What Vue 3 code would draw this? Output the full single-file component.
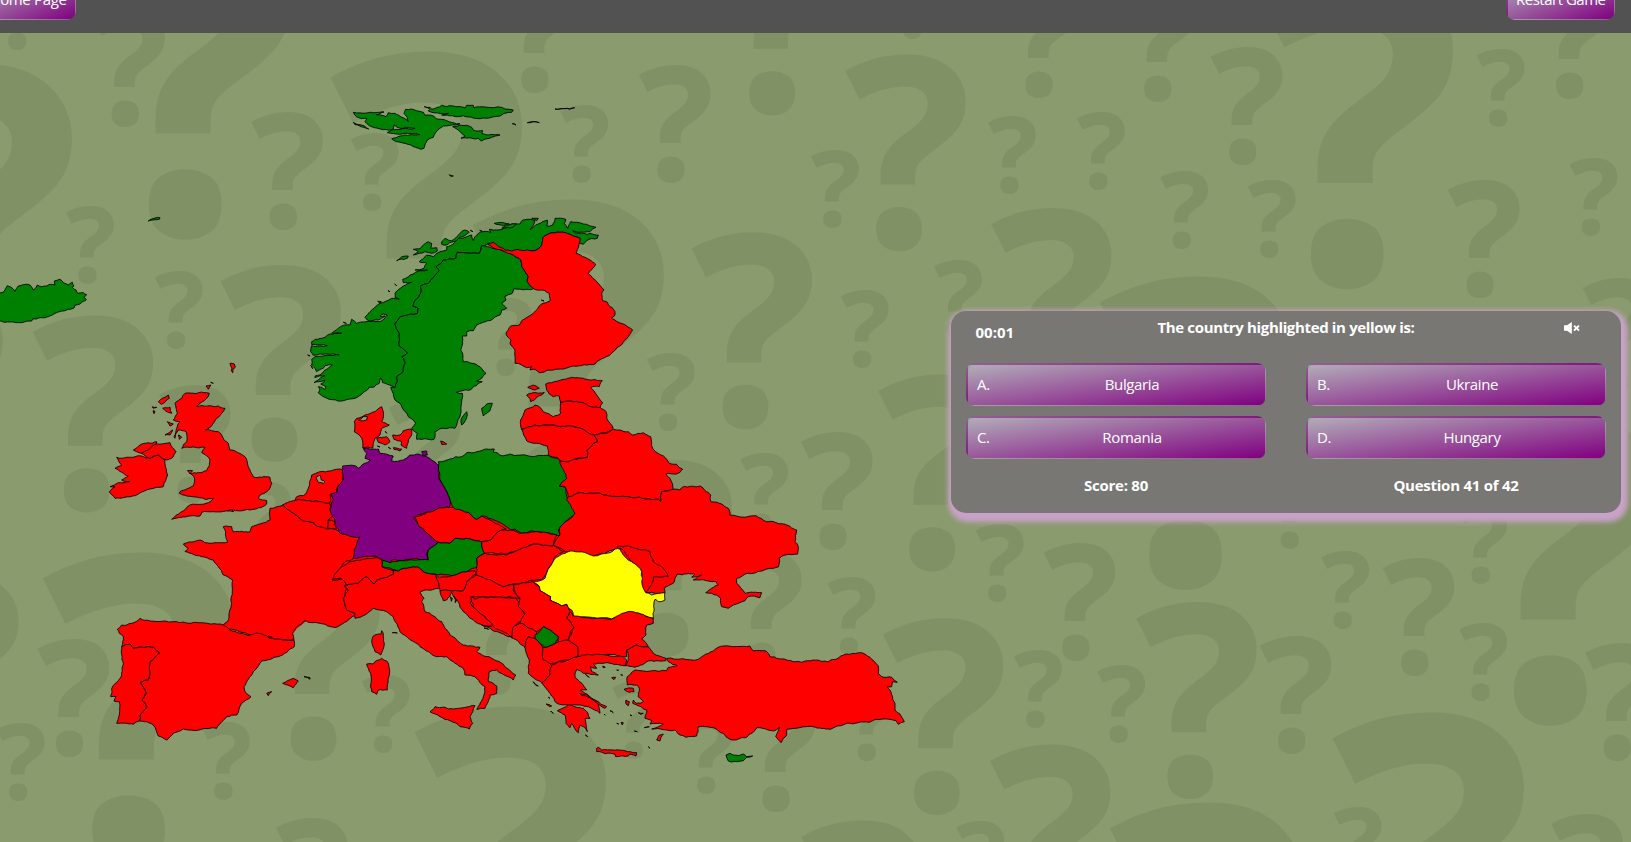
<script setup>
const SIZES = { S: 106, M: 159, L: 267, XL: 425 }

// Question marks of the backdrop: size, then the centre of the dot.
const marks = [
  ['S', 17, 41], ['M', 125.3, 113.3], ['M', 283.3, 216.7], ['S', 87.3, 275], ['S', 372, 202],
  ['S', 176, 340.5], ['XL', 185, 204], ['XL', -34, 341], ['XL', 416, 329], ['L', 274.3, 439.3],
  ['L', 86.5, 490], ['M', 191, 490], ['S', 264, 551], ['S', 581.7, 174.7], ['M', 671, 169.6],
  ['L', 772, 93], ['M', 534.6, 80], ['XL', 558, 477], ['S', 505.7, 367.7], ['L', 745.3, 406.7],
  ['S', 668, 422.7], ['L', 665.5, 634.5], ['S', 761.5, 522], ['M', 762, 656], ['S', 706, 785.7],
  ['M', 776, 799], ['S', 633.5, 750], ['L', 313.3, 738.3], ['S', 223.3, 791.7], ['S', 383, 744],
  ['XL', 128.3, 830], ['M', 308, 923], ['M', 69.5, 744], ['S', 18, 792], ['XL', 500, 984],
  ['M', 497, 682], ['M', 421, 503], ['L', -48, 748],
  ['S', 912.4, 30], ['M', 1039, 85], ['M', 1157.8, 89], ['L', 899, 228.8], ['S', 1009.4, 185.3],
  ['S', 1098.4, 181.5], ['S', 832.3, 219.6], ['M', 1242.6, 151.4], ['S', 1181.6, 240],
  ['S', 1269, 249.2], ['XL', 1347, 253.5], ['S', 1498, 118.7], ['M', 1569.6, 86], ['M', 1480, 284.6],
  ['S', 1590.8, 227.2], ['S', 862, 359.3], ['S', 955.3, 329.2], ['L', 1044.9, 382.3],
  ['XL', 1185.3, 554.2], ['L', 932, 549], ['M', 832.9, 537], ['S', 997.2, 593.4], ['M', 1075.6, 647.6],
  ['S', 1289.7, 540.8], ['S', 1342.7, 620.2], ['M', 1414.8, 662.7], ['S', 1480.5, 575.1],
  ['S', 848.8, 646.5], ['L', 936.7, 792.6], ['S', 1035.3, 719.6], ['S', 1118.5, 734.1],
  ['L', 1190, 776.5], ['M', 1291.8, 741], ['S', 1480.5, 692.2], ['XL', 1550, 690], ['M', 1617.3, 748],
  ['S', 866.8, 752.5], ['L', 1043.8, 919], ['XL', 1195.4, 1080], ['XL', 1418, 990], ['S', 977.5, 890],
  ['L', 855, 995], ['S', 1355, 876], ['M', 1583.3, 919], ['M', 1614.6, 382.3],
].map(([s, cx, cy]) => ({ size: SIZES[s], x: cx - SIZES[s] * 0.204, y: cy + SIZES[s] * 0.071 }))

const R = '#ff0000'
const G = '#008000'
const P = '#800080'
const Y = '#ffff00'
const SEA = '#8a9b6e'

// Borderless land under the countries of the mainland.
const ground = '290,515 330,488 340,470 430,470 520,470 565,450 600,440 600,560 640,580 640,600 620,635 600,655 550,665 532,640 515,632 470,596 440,576 400,580 360,603 310,618 288,636 232,628 240,600 235,560'

// Each sheet of the map: origin, then [fill, points] at three units per pixel.
const sheets = [
  [0, 0, [
    [G, '-10,878 12,875 22,857 32,861 45,874 55,858 70,854 90,855 100,870 112,855 125,860 140,858 150,853 165,855 163,843 180,838 190,848 205,855 217,847 222,858 217,862 228,870 233,880 250,878 260,884 253,892 259,899 240,912 225,916 222,924 200,930 185,933 165,940 145,950 120,953 98,957 95,963 65,968 30,966 0,962 -10,960'],
    [G, '445,663 465,654 480,653 478,658'],
  ]],
  [300, 80, [
    [G, '160,97 200,99 252,96 240,101 228,104 258,110 265,98 285,100 305,112 325,125 322,112 312,100 317,88 350,92 370,97 375,106 400,108 410,117 440,122 480,131 450,136 430,138 408,156 400,172 382,180 372,205 362,208 340,200 290,185 275,176 300,168 360,164 300,163 262,158 270,153 345,145 320,142 300,145 283,135 280,147 250,149 215,140 195,125 200,115 185,116 165,106'],
    [G, '160,127 180,134 206,147 190,142 165,134'],
    [G, '373,80 390,82 395,88 425,76 440,80 495,84 500,76 520,76 522,84 545,80 640,90 635,97 612,100 600,108 560,115 520,114 490,107 425,105 445,100 400,98 385,93 390,88'],
    [G, '458,140 500,136 515,142 520,150 548,152 545,160 600,165 575,172 545,183 535,175 483,175 495,168 480,155'],
    [G, '765,87 824,83'], [G, '637,131 648,135'], [G, '682,128 700,125 718,128'], [G, '448,284 460,288 452,289'],
  ]],
  [300, 200, [
    [G, '55,560 60,570 55,578 75,592 100,599 130,602 165,595 190,578 208,562 222,561 238,550 242,533 248,548 262,553 285,563 292,545 290,530 310,515 316,488 305,470 323,458 298,438 298,400 285,372 300,350 352,340 355,325 338,318 362,280 362,257 385,250 392,240 418,212 408,200 430,180 468,175 472,157 538,160 545,137 562,133 590,150 640,155 705,152 722,140 728,115 745,102 780,97 810,103 840,115 835,130 850,133 860,122 892,115 895,105 870,100 862,103 835,100 818,93 870,95 888,82 850,72 812,65 803,85 793,70 797,58 765,55 758,75 740,78 742,60 715,72 690,90 705,62 693,58 668,60 660,72 640,72 620,82 590,90 568,88 572,97 545,95 525,110 520,122 515,105 495,112 470,115 462,130 440,140 440,150 420,155 400,170 380,165 358,185 380,190 372,205 345,210 383,210 365,212 330,225 308,238 310,248 335,247 310,258 285,280 285,293 298,297 275,295 240,310 210,335 195,352 210,365 235,360 255,348 240,348 250,342 262,345 240,365 215,363 170,370 155,358 150,375 125,378 95,400 125,400 90,402 75,412 45,418 35,425 35,434 82,437 35,437 32,455 40,466 118,464 45,470 35,478 35,495 45,505 50,515 70,505 75,497 97,495 75,510 60,525 45,528 45,533 75,527 60,535 42,548 55,545 75,540 70,548 62,552 78,560 75,568'],
    [G, '340,148 362,145 370,135 385,125 395,130 392,145 410,143 412,153 395,160 375,155 340,165 355,155'],
    [G, '290,182 305,170 325,168 322,175 300,178'],
    [G, '425,125 435,115 455,122 470,110 495,90 508,97 480,112 460,125 440,135 425,133'],
    [G, '583,70 610,68 628,72 610,78'], [G, '605,85 625,75 650,72 640,82'], [G, '695,55 715,55 710,62'],
    [G, '233,304 244,305 240,309'], [G, '264,272 270,275'], [G, '284,252 290,257'], [G, '130,367 139,370'],
    [G, '511,91 519,95'], [G, '539,91 546,94'], [G, '23,465 30,468'], [G, '32,496 38,506'],
    [G, '545,137 562,140 620,155 640,165 662,180 665,200 685,230 682,245 703,265 680,268 642,266 637,280 615,288 618,300 605,310 620,325 605,330 600,345 570,362 530,375 520,392 500,395 500,408 487,408 488,430 482,450 490,485 515,490 540,500 558,520 545,535 530,543 547,545 510,570 468,577 487,580 483,620 480,650 465,685 430,685 405,695 402,718 350,718 352,700 335,685 347,670 340,660 325,650 300,610 285,600 272,562 285,563 292,545 290,530 310,515 316,488 305,470 323,458 298,438 298,400 285,372 300,350 352,340 355,325 338,318 362,280 362,257 385,250 392,240 418,212 408,200 430,180 468,175 472,157 538,160'],
    [G, '485,675 483,658 500,635 502,645'], [G, '545,625 560,612 577,610 570,632 550,648 548,640'],
    [R, '562,130 580,127 605,143 615,150 635,153 660,150 705,152 722,140 728,115 745,102 780,97 810,103 840,115 828,160 855,172 870,180 887,193 865,220 895,250 912,270 905,280 908,302 920,305 925,315 945,335 945,345 933,355 970,372 998,390 985,410 940,455 885,492 820,498 760,510 718,518 705,508 690,510 695,500 680,503 665,495 645,490 645,452 630,430 633,420 618,400 632,378 658,375 665,362 700,340 725,312 750,303 748,280 735,272 703,268 682,245 685,230 665,200 662,180 640,165 620,158 590,148'],
    [R, '724,300 732,303'],
  ]],
  [90, 350, [
    [R, '580,465 605,487 640,512 670,517 680,528 740,540 760,553 808,562 790,625 765,635 750,660 727,690 760,685 768,705 760,750 770,775 800,795 760,820 735,833 690,820 645,812 620,830 608,850 612,870 575,870 540,865 480,855 415,838 400,825 412,815 425,760 428,690 400,675 385,650 370,630 335,620 285,605 295,595 280,582 330,570 360,580 412,577 400,530 425,530 430,545 480,545 485,530 540,510 540,475'],
    [R, '245,508 300,465 355,458 370,445 345,448 325,442 290,438 268,430 270,425 310,408 312,380 300,370 350,362 360,330 335,308 345,292 275,295 290,275 288,245 265,240 255,265 252,260 270,215 250,210 262,190 255,160 275,145 285,130 350,128 358,130 350,145 320,170 385,168 405,175 395,190 360,232 345,240 385,245 415,280 420,300 465,320 475,350 490,380 540,382 545,400 530,425 510,435 505,445 530,452 530,462 480,480 430,480 370,485 335,487 330,498 300,498'],
    [R, '80,322 110,322 155,318 180,325 205,315 225,330 233,375 220,410 180,417 145,432 75,445 58,425 75,410 60,410 85,398 120,395 95,390 115,378 75,355 95,345'],
    [R, '130,300 150,285 200,275 200,290 175,300 155,310 140,305'],
    [R, '155,310 175,300 200,282 240,278 258,305 245,325 230,330 205,315 180,325'],
    [R, '205,155 235,135 238,145 215,163'], [R, '187,170 200,172 190,175'], [R, '189,182 195,184 192,191'],
    [R, '218,175 240,172 245,190 228,184'], [R, '232,215 250,222 240,228'], [R, '225,255 248,240 240,255'],
    [R, '348,108 362,105 355,118'], [R, '420,40 433,42 436,52 429,58 428,68 424,62 426,54'], [R, '362,97 370,100'], [R, '413,482 425,479 431,485'],
    [R, '292,362 308,362 300,372'], [R, '265,255 275,262 268,268'],
    [R, '640,437 655,415 665,375 690,365 755,358 760,370 758,400 745,405 740,430 720,433 722,455 710,465 690,455 640,450 615,452 620,440'],
    [SEA, '678,382 690,376 694,390 705,395 700,400 686,398'],
    [R, '578,465 610,452 640,450 690,455 720,460 720,480 735,495 715,510 715,538 680,528 670,517 640,512 605,487'],
    [R, '715,510 735,515 738,538 712,535'],
  ]],
  [350, 560, [
    [R, '-10,75 25,70 50,50 72,72 80,60 112,52 130,43 130,32 145,33 160,25 202,20 220,35 257,43 262,55 270,85 225,90 210,97 222,115 215,125 225,155 275,185 300,225 340,255 390,262 380,275 400,287 460,313 497,345 490,360 475,350 440,330 418,335 415,365 440,378 440,400 420,405 405,445 380,448 400,410 405,380 375,350 345,345 340,325 315,310 290,290 260,290 210,260 150,215 130,170 110,155 70,145 45,165 15,175 15,160 -10,150 -20,115 -5,90 -18,78'],
    [R, '240,455 255,440 310,447 375,437 360,470 368,490 358,507 330,500 270,470'], [R, '127,218 142,219'],
  ]],
  [300, 380, [
    [R, '188,203 185,175 163,155 163,125 170,115 195,105 225,95 245,80 250,95 245,125 268,135 245,145 240,165 225,175 218,205'],
    [SEA, '175,121 190,110 202,110 200,120 182,122'],
    [R, '230,175 260,170 270,185 255,195 235,187'], [R, '278,165 300,165 310,152 335,148 335,165 325,180 320,205 303,195 305,185 282,178'],
    [R, '280,203 305,207 300,213 282,208'], [R, '422,183 440,192 425,193'], [R, '256,154 260,160'], [R, '232,198 240,201'], [R, '265,202 272,206'],
    [P, '190,205 235,207 240,220 280,228 275,243 310,240 330,225 355,222 380,230 395,240 415,255 420,270 415,290 435,325 452,365 448,382 415,385 395,395 340,412 358,440 400,475 415,487 385,510 380,520 385,540 350,535 310,542 275,540 270,548 240,535 225,528 160,535 162,510 180,472 120,460 105,435 103,415 90,390 100,360 92,343 112,335 115,318 130,300 128,258 165,257 175,265 200,248 210,240 195,235 200,220'],
    [P, '365,215 380,213 382,225 368,228'],
    [R, '345,412 395,395 415,385 448,382 480,385 505,397 530,418 545,408 570,420 620,448 600,452 575,478 545,485 500,475 465,475 450,490 415,487 400,475 358,440'],
    [G, '415,245 485,230 500,218 560,207 583,207 580,217 605,227 630,222 745,226 775,235 800,285 802,300 778,318 798,325 800,350 825,390 825,402 775,450 782,468 760,462 705,455 690,453 665,460 645,447 632,450 590,423 560,410 545,408 530,418 505,397 460,382 452,365 435,325 420,300 415,270'],
    [R, '545,485 575,478 600,452 632,450 665,460 705,455 770,465 760,497 700,492 620,522 555,520 545,500'],
    [G, '415,487 450,490 465,475 500,475 545,485 545,500 555,520 530,535 532,562 500,575 455,587 370,575 352,560 310,565 295,573 245,560 245,540 270,548 310,542 385,540 385,510'],
    [R, '555,520 620,525 700,492 760,497 790,515 765,530 740,580 725,600 640,612 610,620 560,600 528,582 530,535'],
    [R, '97,600 115,570 135,555 150,545 225,533 245,540 245,560 280,572 280,583 262,592 230,600 222,612 200,590 175,610 140,615 122,595'],
    [R, '407,590 455,587 500,575 525,572 528,582 500,605 490,632 420,632 415,605'],
    [R, '420,632 490,632 500,605 528,585 610,620 640,612 640,630 660,655 630,650 545,650 515,650 512,670 560,715 640,775 600,758 570,745 525,725 490,695 475,665 455,637 440,660 430,662'],
    [R, '512,650 525,658 545,650 600,650 648,655 655,665 665,690 675,705 665,725 640,740 635,772 580,740 520,680'],
    [R, '450,650 457,655 454,664'], [R, '462,648 470,660 466,668'], [R, '545,735 560,740 575,738'], [R, '552,744 566,748'],
  ]],
  [500, 370, [
    [R, '283,195 325,188 340,178 360,180 385,185 398,195 430,188 452,200 458,235 500,268 508,280 530,283 548,298 530,312 498,312 510,325 520,358 485,365 482,395 475,388 420,382 350,380 300,370 240,368 205,380 195,350 178,348 200,325 180,280 180,272 205,275 262,262 260,240 280,220 292,215'],
    [R, '65,178 62,150 75,120 105,105 118,110 130,125 160,140 182,130 182,97 200,93 240,97 275,110 300,112 318,125 320,145 340,175 325,185 300,190 283,195 255,182 215,168 170,168 105,165'],
    [R, '65,178 105,165 170,168 215,168 255,182 283,195 292,215 280,220 260,240 262,262 230,265 205,275 180,272 172,262 145,255 142,228 110,220 80,213'],
    [R, '137,42 155,38 190,28 215,22 260,28 307,32 300,42 298,50 272,52 290,75 308,98 300,112 275,110 240,97 200,93 182,97 178,78 160,80 148,72 140,60'],
    [R, '83,52 100,45 118,55 105,60'], [R, '80,75 108,68 133,67 125,75 110,82 92,95 90,85'],
    [R, '205,380 240,368 300,370 350,380 420,382 475,388 482,395 485,365 520,358 540,360 550,350 600,348 632,375 632,395 665,402 685,415 690,435 735,442 768,437 800,455 850,462 890,480 885,515 895,530 893,552 855,555 838,565 836,590 800,597 745,610 710,625 710,640 735,670 785,668 780,683 745,680 735,692 700,705 685,715 665,710 662,685 635,670 617,668 655,645 648,635 600,630 580,630 605,615 575,622 585,612 533,612 520,640 492,655 495,668 440,668 345,537 280,558 235,548 195,545 160,525 175,500 180,495 178,475 225,430 200,390'],
    [R, '350,530 385,527 450,545 460,575 485,590 505,620 460,620 455,645 437,668 425,645 425,605 400,580 370,540'],
    [Y, '100,637 120,632 135,625 150,590 165,565 205,545 260,550 280,558 330,548 345,537 360,537 375,560 415,590 425,605 428,650 437,668 455,675 495,668 495,690 475,695 465,688 460,745 400,728 375,730 335,747 220,738 215,720 205,715 200,703 185,708 150,690 152,680 120,662 118,650'],
  ]],
  [90, 600, [
    [R, '82,88 95,75 125,70 150,55 180,63 270,68 325,68 400,75 420,90 480,105 505,100 545,115 612,120 613,140 565,170 515,183 490,215 462,260 465,275 483,290 455,310 440,345 410,350 380,385 280,387 250,400 230,420 205,408 190,375 170,365 148,363 150,345 170,320 155,300 168,280 150,247 175,240 180,185 208,158 190,142 130,145 120,132 95,140 100,110 88,100'],
    [R, '95,140 120,132 130,145 190,142 208,158 180,185 175,240 150,247 168,280 155,300 170,320 150,345 148,363 130,373 80,370 88,345 88,305 72,303 78,290 62,290 65,265 90,235 100,190'],
    [R, '578,250 610,235 625,243 610,263'], [R, '642,230 660,233 660,238'], [R, '530,280 545,275 535,287'], [R, '535,108 547,112 538,115'],
    [R, '875,92 880,100 883,130 872,165 855,155 845,125 850,108 873,102'],
    [R, '830,192 850,192 875,175 890,183 898,205 892,270 865,270 860,283 845,275 842,220'],
  ]],
  [350, 560, [
    [R, '670,168 785,178 825,158 850,155 910,175 910,190 890,195 888,225 875,237 895,260 860,255 830,270 830,290 780,283 740,285 683,290 683,262 655,240 672,202 650,175 660,155'],
    [R, '490,75 550,65 568,80 570,92 602,110 600,120 635,138 650,133 660,155 650,175 672,202 660,220 655,240 625,248 625,230 600,210 580,200 560,215 510,190 525,160 505,140 510,115 500,105'],
    [R, '485,232 488,205 510,190 560,215 555,235 535,230 525,262'],
    [R, '683,290 740,283 780,288 820,290 830,300 825,317 780,310 730,312 740,325 720,320 725,335 745,345 700,340 680,328 675,350 710,390 690,390 745,425 750,460 715,440 690,435 620,430 600,400 575,368 600,345 605,315 655,300'],
    [R, '525,262 535,230 555,235 578,262 578,290 605,315 600,345 575,368 560,360 535,340 538,300'],
    [R, '578,262 585,262 615,250 655,240 683,262 683,290 655,300 600,312 580,300'],
    [G, '555,225 580,200 600,210 625,230 615,250 585,262 555,235'],
    [R, '622,452 655,435 700,445 715,465 720,475 705,475 712,515 700,500 690,495 685,518 665,490 660,503 648,490 645,465'],
    [R, '688,400 710,402 770,440 765,445 735,425'],
    [R, '740,565 745,562 755,570 790,570 840,575 860,578 858,588 840,582 835,588 797,590 795,583 740,575'],
    [R, '550,365 565,378 558,376'], [R, '595,412 600,415'], [R, '588,432 605,438 598,440'], [R, '602,453 610,460'],
    [R, '758,318 766,322 760,323'], [R, '785,353 797,352 792,359'], [R, '800,330 806,331'], [R, '812,344 818,346'],
    [R, '706,525 713,530'], [R, '780,452 790,458'], [R, '762,463 766,465'], [R, '800,490 806,492'], [R, '813,487 820,488 817,495'],
    [R, '840,465 846,467'], [R, '853,513 862,515'], [R, '895,560 900,565'], [R, '706,342 718,352'],
    [R, '822,388 850,385 852,395 838,397'], [R, '828,420 838,425 835,437 828,432'], [R, '865,458 880,460 872,463'], [R, '883,503 898,500'],
  ]],
  [600, 560, [
    [R, '80,270 110,255 145,260 160,280 198,295 198,302 150,302 105,322 75,317 85,295'],
    [R, '200,295 295,298 310,287 370,258 450,258 460,272 495,272 510,290 560,300 605,307 640,300 685,305 735,283 785,278 810,292 835,318 835,340 845,350 875,352 892,367 878,365 875,380 862,380 885,430 885,450 900,462 913,485 895,493 888,482 830,478 808,487 740,490 690,508 640,500 560,508 560,525 543,548 527,530 538,502 520,513 472,503 440,532 390,538 345,505 295,500 290,528 258,532 240,525 225,510 155,507 190,492 150,492 155,482 135,475 140,450 98,430 100,420 110,430 130,425 115,410 118,385 110,375 82,375 82,350 105,330 200,332 205,322 232,317 205,305'],
    [R, '170,540 178,525 190,522 180,543'],
    [G, '378,585 390,580 400,585 430,582 440,590 458,588 440,592 430,602 410,605 385,603'],
  ]],
]

// Bends a long edge by an amount that depends only on its two ends, so that
// neighbouring countries share the same coastline detail.
function bend(a, b, depth, out) {
  const len = Math.hypot(b[0] - a[0], b[1] - a[1])
  if (depth === 0 || len < 3.5) {
    out.push(b)
    return
  }
  const flip = a[0] < b[0] || (a[0] === b[0] && a[1] < b[1]) ? 1 : -1
  const h = Math.sin((a[0] + b[0]) * 12.9898 + (a[1] + b[1]) * 78.233) * 43758.5453
  const k = (h - Math.floor(h) - 0.5) * (len > 12 ? 0.1 : 0.2) * flip
  const m = [(a[0] + b[0]) / 2 - (b[1] - a[1]) * k, (a[1] + b[1]) / 2 + (b[0] - a[0]) * k]
  bend(a, m, depth - 1, out)
  bend(m, b, depth - 1, out)
}

const lands = sheets.flatMap(([ox, oy, list]) =>
  list.map(([fill, text]) => {
    const pts = text.split(' ').map((p) => {
      const [x, y] = p.split(',').map(Number)
      return [ox + x / 3, oy + y / 3]
    })
    const out = []
    pts.forEach((p, i) => bend(p, pts[(i + 1) % pts.length], 3, out))
    return { fill, points: out.map((p) => p.map((n) => n.toFixed(1)).join(',')).join(' ') }
  })
)

const answers = [
  { key: 'A.', name: 'Bulgaria' },
  { key: 'B.', name: 'Ukraine' },
  { key: 'C.', name: 'Romania' },
  { key: 'D.', name: 'Hungary' },
]
</script>

<template>
  <div class="page">
    <svg class="backdrop" viewBox="0 0 1631 842" aria-hidden="true">
      <text v-for="(m, i) in marks" :key="i" :x="m.x" :y="m.y" :font-size="m.size">?</text>
    </svg>

    <header class="topbar">
      <button class="btn home">Home Page</button>
      <button class="btn restart">Restart Game</button>
    </header>

    <main class="game">
      <svg class="map" viewBox="0 33 940 809">
        <polygon class="ground" :points="ground" />
        <polygon v-for="(l, i) in lands" :key="i" class="land" :points="l.points" :fill="l.fill" />
      </svg>

      <section class="panel">
        <div class="top">
          <span class="timer">00:01</span>
          <h1 class="question">The country highlighted in yellow is:</h1>
          <svg class="mute" viewBox="0 0 16 12">
            <path d="M0 3.2h3L7.8 0v12L3 8.8H0z" />
            <path class="cross" d="M10 3.6l5 5M15 3.6l-5 5" />
          </svg>
        </div>
        <div class="answers">
          <button v-for="a in answers" :key="a.key" class="btn answer">
            <span class="key">{{ a.key }}</span>
            <span class="name">{{ a.name }}</span>
          </button>
        </div>
        <div class="status">
          <span>Score: 80</span>
          <span>Question 41 of 42</span>
        </div>
      </section>
    </main>
  </div>
</template>

<style>
body {
  margin: 0;
  overflow: hidden;
}
</style>

<style scoped>
.page {
  position: relative;
  width: 1631px;
  height: 842px;
  overflow: hidden;
  background: #8a9b6e;
  color: #fff;
  font-family: "Open Sans", "Noto Sans", sans-serif;
  font-size: 15px;
}
.backdrop {
  position: absolute;
  inset: 0;
  width: 1631px;
  height: 842px;
  font-family: "Open Sans", sans-serif;
  font-weight: 700;
  fill: #809165;
}
.topbar {
  position: relative;
  box-sizing: border-box;
  display: flex;
  justify-content: space-between;
  align-items: flex-end;
  height: 33px;
  padding: 0 16.5px 13.5px 0;
  overflow: hidden;
  background: #525252;
}
.btn {
  box-sizing: border-box;
  flex: none;
  height: 42.6px;
  padding: 1px 0 0;
  border: solid rgba(121, 119, 116, 0.2);
  border-width: 2px 1px 1px 2px;
  border-radius: 9px;
  background: linear-gradient(to bottom right, #b2adb8, #800080);
  color: #fff;
  font: inherit;
  letter-spacing: -0.35px;
}
.home {
  width: 97px;
  margin-left: -21px;
}
.restart {
  width: 108.5px;
  letter-spacing: -0.5px;
}
.game {
  position: relative;
  display: flex;
  align-items: flex-start;
  height: 809px;
}
.map {
  flex: none;
  width: 940px;
  height: 809px;
}
.ground {
  fill: #ff0000;
}
.land {
  stroke: #000;
  stroke-opacity: 0.85;
  stroke-width: 1;
  stroke-linejoin: round;
}
.panel {
  box-sizing: border-box;
  width: 670px;
  height: 201.7px;
  margin: 278px 0 0 11px;
  padding: 0 15px;
  border-radius: 15px;
  background: #797774;
  box-shadow: 2px 4px 5px 5px #c8a2c8;
}
.top {
  display: grid;
  grid-template-columns: 100px 1fr 100px;
  height: 52px;
}
.timer {
  padding: 11px 0 0 9.5px;
  font-weight: 700;
  line-height: 20px;
}
.question {
  margin: 6px 0 0;
  font-size: 15px;
  font-weight: 700;
  line-height: 20px;
  text-align: center;
  white-space: nowrap;
  letter-spacing: -0.35px;
}
.mute {
  justify-self: end;
  width: 16px;
  height: 12px;
  margin: 11px 26px 0 0;
  fill: #fff;
}
.cross {
  fill: none;
  stroke: #fff;
  stroke-width: 2;
}
.answers {
  display: grid;
  grid-template-columns: 300px 300px;
  column-gap: 40px;
  row-gap: 10.6px;
}
.answer {
  display: flex;
  align-items: center;
  padding: 0 10px 1px 9px;
}
.key {
  width: 32px;
  text-align: left;
}
.name {
  flex: 1;
  text-align: center;
}
.status {
  display: grid;
  grid-template-columns: 300px 300px;
  column-gap: 40px;
  margin-top: 16px;
  font-weight: 700;
  line-height: 20px;
  text-align: center;
  letter-spacing: -0.25px;
}
</style>
